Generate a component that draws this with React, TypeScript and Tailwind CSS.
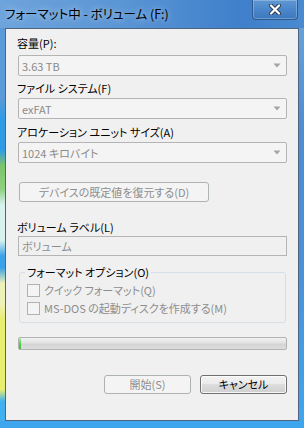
import React from "react";

function Combo({ text }: { text: string }) {
  return (
    <div className="h-[21px] border border-[#b4b4b4] rounded-[2px] bg-[#f4f4f4] flex items-center pl-[3px] pr-[5px] text-[11px] leading-[16px] text-[#8a8a8a]">
      <span>{text}</span>
      <svg className="ml-auto" width="8" height="5" viewBox="0 0 8 5">
        <path d="M0.5 0.5h7L4 4.5z" fill="#a4a4a4" />
      </svg>
    </div>
  );
}

function Label({ text, className }: { text: string; className: string }) {
  return (
    <div className={"h-[16px] leading-[16px] text-[11px] text-black ml-[-1px] " + className}>{text}</div>
  );
}

function Check({ text }: { text: string }) {
  return (
    <div className="h-[16px] flex items-center gap-[4px] text-[11px] leading-[16px] text-[#8d8d8d] mt-[2px]">
      <div className="w-[13px] h-[13px] border border-[#b1b1b1] bg-[#f4f4f4]" />
      <span>{text}</span>
    </div>
  );
}

export default function App() {
  return (
    <div className="w-[304px] h-[428px] flex flex-col overflow-hidden bg-[linear-gradient(to_bottom,#6ea6dd,#4d8dd2_30%,#4a90d8_60%,#3ea6ee)] font-['Noto_Sans_CJK_JP',sans-serif] [font-feature-settings:'palt']">
      <div className="h-[28px] shrink-0 flex items-start bg-[linear-gradient(to_right,#6ea4dc,#5a95d4_40%,#3f7fcb_80%,#4a8ad0)]">
        <div className="pl-[5px] pt-[5px] text-[12.5px] leading-[18px] text-black whitespace-nowrap [text-shadow:0_0_6px_rgba(255,255,255,0.7)]">
          フォーマット中 - ボリューム (F:)
        </div>
        <div className="ml-auto mr-[6px] w-[46px] h-[20px] rounded-b-[4px] border border-t-0 border-[#2f5a8c] bg-[linear-gradient(to_bottom,#5f97d2,#4a86c8_50%,#3b78bf)] shadow-[inset_0_0_0_1px_rgba(255,255,255,0.25)] flex items-center justify-center">
          <svg width="12" height="11" viewBox="0 0 12 11">
            <path d="M2 1.5L10 9.5M10 1.5L2 9.5" stroke="#2b3d55" strokeWidth="4" strokeLinecap="round" />
            <path d="M2 1.5L10 9.5M10 1.5L2 9.5" stroke="#ffffff" strokeWidth="2.2" strokeLinecap="round" />
          </svg>
        </div>
      </div>
      <div className="flex flex-1">
        <div className="w-[5px] bg-[linear-gradient(to_bottom,#5a9ad8_0%,#5a9ad8_18%,#2f9be6_23%,#2f9be6_31%,#7cc46a_35%,#8ed080_41%,#d8f2ee_45%,#d8f2ee_54%,#3aa2e8_58%,#3aa2e8_61%,#eef2b8_65%,#eef2b8_70%,#e8ee70_74%,#e8ee70_92%,#40b0f0_95%,#40b0f0_100%)]" />
        <div className="flex-1 border border-[#4e6480] bg-[#f0f0f0] flex flex-col pl-[12px] pr-[11px] pt-[6px]">
          <Label text="容量(P):" className="" />
          <div className="mt-[4px]">
            <Combo text="3.63 TB" />
          </div>
          <Label text="ファイル システム(F)" className="mt-[4px]" />
          <div className="mt-[2px]">
            <Combo text="exFAT" />
          </div>
          <Label text="アロケーション ユニット サイズ(A)" className="mt-[5px]" />
          <div className="mt-[2px]">
            <Combo text="1024 キロバイト" />
          </div>
          <div className="mt-[19px] ml-[1px] w-[190px] h-[20px] border border-[#adb2b5] rounded-[3px] bg-[#f4f4f4] text-[#8d8d8d] text-[11px] leading-[18px] flex items-center justify-center">
            デバイスの既定値を復元する(D)
          </div>
          <Label text="ボリューム ラベル(L)" className="mt-[17px]" />
          <div className="mt-[1px] h-[20px] border border-[#b5b5b5] bg-[#f0f0f0] flex items-center pl-[3px] text-[11px] leading-[16px] text-[#8d8d8d]">
            ボリューム
          </div>
          <fieldset className="mt-[8px] mx-[1px] border border-[#d5dfe5] rounded-[3px] pl-[7px] pb-[6px]">
            <legend className="ml-[-2px] px-[2px] h-[16px] leading-[16px] text-[11px] text-black">
              フォーマット オプション(O)
            </legend>
            <Check text="クイック フォーマット(Q)" />
            <Check text="MS-DOS の起動ディスクを作成する(M)" />
          </fieldset>
          <div className="mt-[14px] h-[13px] border border-[#b2b2b2] rounded-[2px] bg-[linear-gradient(to_bottom,#f2f2f2,#e2e2e2_45%,#d4d4d4_55%,#dcdcdc)] flex">
            <div className="w-[2px] bg-[linear-gradient(to_bottom,#a8f5a8,#4fd34f_50%,#3cc23c)]" />
          </div>
          <div className="mt-[25px] flex justify-end gap-[9px]">
            <div className="w-[87px] h-[19px] border border-[#adb2b5] rounded-[3px] bg-[#f4f4f4] text-[#8d8d8d] text-[11px] leading-[17px] flex items-center justify-center">
              開始(S)
            </div>
            <div className="w-[87px] h-[19px] border border-[#707070] rounded-[3px] bg-[linear-gradient(to_bottom,#f2f2f2,#ebebeb_45%,#dddddd_50%,#cfcfcf)] shadow-[inset_0_0_0_1px_rgba(255,255,255,0.8)] text-black text-[11px] leading-[17px] flex items-center justify-center">
              キャンセル
            </div>
          </div>
        </div>
        <div className="w-[5px]" />
      </div>
      <div className="h-[7px] shrink-0" />
    </div>
  );
}
